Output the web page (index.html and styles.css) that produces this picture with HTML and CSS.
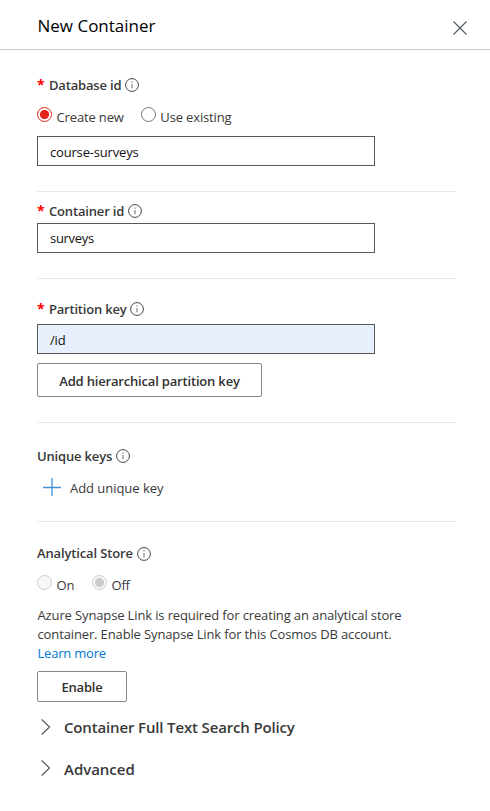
FILE: index.html
```html
<!DOCTYPE html>
<html lang="en">
<head>
<meta charset="utf-8">
<title>New Container</title>
<link rel="stylesheet" href="styles.css">
</head>
<body>
<svg class="defs" width="0" height="0" aria-hidden="true">
  <symbol id="info" viewBox="0 0 14 14"><circle cx="7" cy="7" r="6.4" fill="none" stroke="#444" stroke-width="1"/><path d="M7 5.9V10.2M7 3.6V4.7" stroke="#777" stroke-width="1.1" fill="none"/></symbol>
  <symbol id="chevron" viewBox="0 0 10 16"><path d="M.7.5 8.6 8 .7 15.5" fill="none" stroke="#555" stroke-width="1.1"/></symbol>
</svg>
<header class="header">
  <h1 class="title">New Container</h1>
  <svg class="close" viewBox="0 0 14 14"><path d="M.5.5 13.5 13.5M13.5.5.5 13.5" stroke="#505860" stroke-width="1.1"/></svg>
</header>
<main class="form">
  <section class="section database">
    <div class="label"><span class="required">*</span><span>Database id</span><svg class="info"><use href="#info"/></svg></div>
    <div class="radios">
      <span class="radio checked"></span><span class="option">Create new</span>
      <span class="radio"></span><span class="option">Use existing</span>
    </div>
    <div class="input">course-surveys</div>
  </section>
  <section class="section container">
    <div class="label"><span class="required">*</span><span>Container id</span><svg class="info"><use href="#info"/></svg></div>
    <div class="input">surveys</div>
  </section>
  <section class="section partition">
    <div class="label"><span class="required">*</span><span>Partition key</span><svg class="info"><use href="#info"/></svg></div>
    <div class="input filled">/id</div>
    <div class="button wide">Add hierarchical partition key</div>
  </section>
  <section class="section unique">
    <div class="label"><span>Unique keys</span><svg class="info"><use href="#info"/></svg></div>
    <div class="add"><svg class="plus" viewBox="0 0 18 18"><path d="M9 0V18M0 9.5H18" stroke="#4090d6" stroke-width="1.3"/></svg><span>Add unique key</span></div>
  </section>
  <section class="section analytical">
    <div class="label"><span>Analytical Store</span><svg class="info low"><use href="#info"/></svg></div>
    <div class="radios">
      <span class="radio disabled"></span><span class="option">On</span>
      <span class="radio disabled checked"></span><span class="option">Off</span>
    </div>
    <p class="note">Azure Synapse Link is required for creating an analytical store<br>container. Enable Synapse Link for this Cosmos DB account.<br><a class="link">Learn more</a></p>
    <div class="button enable">Enable</div>
  </section>
  <div class="fold policy"><svg class="chevron"><use href="#chevron"/></svg><span>Container Full Text Search Policy</span></div>
  <div class="fold"><svg class="chevron"><use href="#chevron"/></svg><span>Advanced</span></div>
</main>
</body>
</html>
```
FILE: styles.css
```css
* { box-sizing: border-box; }
body { margin: 0; height: 811px; background: #fff; color: #393939; font: 13px/20px "Open Sans", "Noto Sans", sans-serif; white-space: nowrap; overflow: hidden; }
svg { display: block; flex: none; }
.defs { position: absolute; }
.header { display: flex; justify-content: space-between; height: 50px; padding: 14px 23px 0 37.5px; border-bottom: 1px solid #ccc; }
.title { margin: 0; color: #000; font-size: 17px; font-weight: 400; line-height: 24px; }
.close { width: 14px; height: 14px; margin-top: 7px; }
.form { width: 456px; padding-left: 37px; }
.section { border-bottom: 1px solid #eaeaea; }
.label { display: flex; align-items: flex-start; height: 20px; font-weight: 600; letter-spacing: -.17px; }
.required { width: 12px; color: #f00; font-size: 14px; font-weight: 700; }
.info { width: 14px; height: 14px; margin: 3px 0 0 4px; }
.low { margin-top: 4px; }
.radios { display: flex; height: 20px; letter-spacing: -.14px; }
.radio { width: 15px; height: 15px; border: 1px solid #767676; border-radius: 50%; background: #fff; }
.option { margin: 0 17px 0 4.5px; }
.radio.checked { border-color: #e3241b; background: radial-gradient(circle, #e3241b 4.2px, #fff 4.9px); }
.radio.disabled { border-color: #ccc; background: #f8f8f8; }
.radio.disabled.checked { background: radial-gradient(circle, #ccc 4.2px, #f8f8f8 4.9px); }
.input { width: 338px; height: 30px; padding: 5px 12px 0; border: 1px solid #595959; color: #111; letter-spacing: -.18px; }
.filled { background: #e8f0fe; }
.button { display: flex; justify-content: center; align-items: center; border: 1px solid #8a8886; border-radius: 2px; color: #323130; font-weight: 600; letter-spacing: -.18px; }
.database { height: 142px; padding-top: 25px; }
.database .radios { margin-top: 12px; }
.database .input { margin-top: 9px; }
.container { height: 87px; padding-top: 9px; }
.container .input { margin-top: 2px; padding-top: 4px; letter-spacing: -.3px; }
.partition { height: 144px; padding-top: 20px; }
.partition .label { letter-spacing: -.21px; }
.partition .input { margin-top: 5px; }
.wide { width: 225px; height: 34px; margin-top: 9px; padding-top: 2px; }
.unique { height: 99px; padding-top: 23px; }
.add { display: flex; height: 20px; margin-top: 12px; padding-left: 6px; letter-spacing: -.04px; }
.plus { width: 18px; height: 18px; margin-right: 9px; }
.analytical { height: 180px; padding-top: 21px; border: 0; }
.analytical .label { letter-spacing: -.14px; }
.analytical .radios { margin-top: 12px; }
.analytical .option { margin-right: 17.6px; }
.note { margin: 11px 0 0; padding-left: .5px; line-height: 19px; letter-spacing: -.13px; }
.link { color: #0078d4; letter-spacing: -.2px; }
.enable { width: 90px; height: 31px; margin-top: 8px; }
.fold { display: flex; height: 42px; padding: 14px 0 0 4px; font-size: 15px; line-height: 22px; font-weight: 600; letter-spacing: -.03px; }
.policy { letter-spacing: -.15px; }
.chevron { width: 10px; height: 16px; margin: 2px 13px 0 0; }
.policy .chevron { margin-top: 3px; }
```
